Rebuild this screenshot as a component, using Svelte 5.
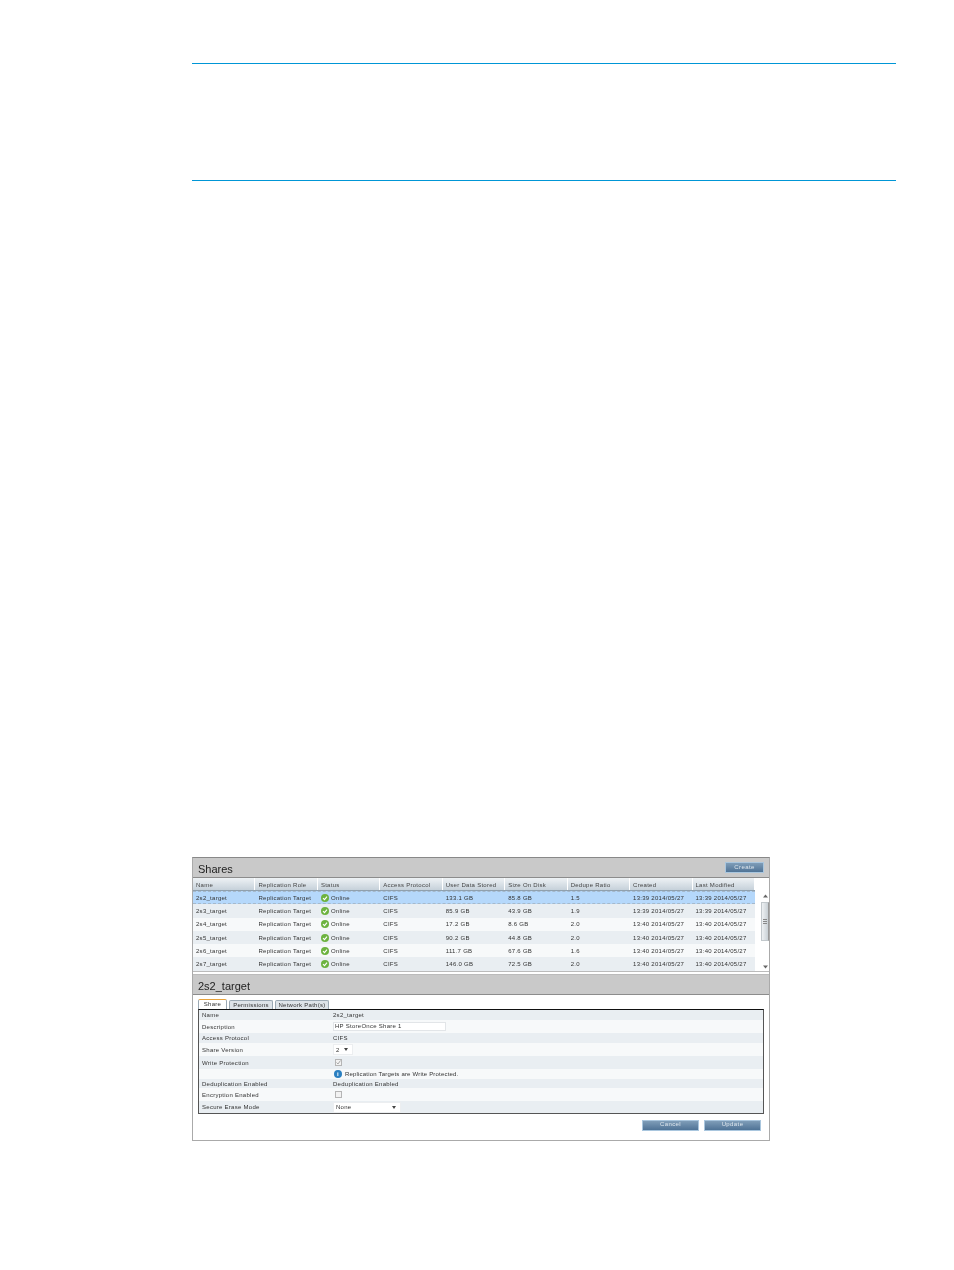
<script>
  const columns = ['Name', 'Replication Role', 'Status', 'Access Protocol', 'User Data Stored', 'Size On Disk', 'Dedupe Ratio', 'Created', 'Last Modified'];

  const shares = [
    { name: '2s2_target', stored: '133.1 GB', disk: '85.8 GB', ratio: '1.5', created: '13:39 2014/05/27', modified: '13:39 2014/05/27' },
    { name: '2s3_target', stored: '85.9 GB', disk: '43.9 GB', ratio: '1.9', created: '13:39 2014/05/27', modified: '13:39 2014/05/27' },
    { name: '2s4_target', stored: '17.2 GB', disk: '8.6 GB', ratio: '2.0', created: '13:40 2014/05/27', modified: '13:40 2014/05/27' },
    { name: '2s5_target', stored: '90.2 GB', disk: '44.8 GB', ratio: '2.0', created: '13:40 2014/05/27', modified: '13:40 2014/05/27' },
    { name: '2s6_target', stored: '111.7 GB', disk: '67.6 GB', ratio: '1.6', created: '13:40 2014/05/27', modified: '13:40 2014/05/27' },
    { name: '2s7_target', stored: '146.0 GB', disk: '72.5 GB', ratio: '2.0', created: '13:40 2014/05/27', modified: '13:40 2014/05/27' }
  ];
</script>

<div class="page">
  <div class="rule"></div>
  <div class="rule second"></div>

  <div class="panel">
    <div class="titlebar">
      <h2>Shares</h2>
      <button class="btn create">Create</button>
    </div>

    <div class="table-area">
      <div class="table">
        <div class="row head">
          {#each columns as col}
            <div class="cell">{col}</div>
          {/each}
        </div>
        {#each shares as s, i}
          <div class="row" class:selected={i === 0} class:odd={i % 2 === 1}>
            <div class="cell">{s.name}</div>
            <div class="cell">Replication Target</div>
            <div class="cell status">
              <svg width="8" height="8" viewBox="0 0 8 8">
                <circle cx="4" cy="4" r="4" fill="#6db33f" />
                <path d="M2 4.1 3.5 5.6 6 2.6" fill="none" stroke="#fff" stroke-width="1.1" />
              </svg>
              Online
            </div>
            <div class="cell">CIFS</div>
            <div class="cell">{s.stored}</div>
            <div class="cell">{s.disk}</div>
            <div class="cell">{s.ratio}</div>
            <div class="cell">{s.created}</div>
            <div class="cell">{s.modified}</div>
          </div>
        {/each}
      </div>
      <div class="scrollbar">
        <svg class="arrow" width="5" height="4" viewBox="0 0 5 4"><path d="M2.5 0.5 5 3.5H0z" fill="#666" /></svg>
        <div class="thumb"><span></span><span></span><span></span></div>
        <svg class="arrow" width="5" height="4" viewBox="0 0 5 4"><path d="M2.5 3.5 5 0.5H0z" fill="#666" /></svg>
      </div>
    </div>

    <div class="titlebar detail-title">
      <h2>2s2_target</h2>
    </div>

    <div class="detail">
      <div class="tabs">
        <div class="tab active">Share</div>
        <div class="tab">Permissions</div>
        <div class="tab wide">Network Path(s)</div>
      </div>

      <div class="form">
        <div class="frow dark h10"><div class="label">Name</div><div>2s2_target</div></div>
        <div class="frow h13"><div class="label">Description</div><div class="input">HP StoreOnce Share 1</div></div>
        <div class="frow dark h10"><div class="label">Access Protocol</div><div>CIFS</div></div>
        <div class="frow h13"><div class="label">Share Version</div><div class="select small">2<i></i></div></div>
        <div class="frow dark h13"><div class="label">Write Protection</div><div class="check checked">
          <svg width="7" height="7" viewBox="0 0 7 7"><path d="M1.5 3.5 3 5 5.5 1.5" fill="none" stroke="#aaa" stroke-width="1" /></svg>
        </div></div>
        <div class="frow h10"><div class="label"></div><div class="note">
          <span class="info">i</span>
          Replication Targets are Write Protected.
        </div></div>
        <div class="frow dark h9"><div class="label">Deduplication Enabled</div><div>Deduplication Enabled</div></div>
        <div class="frow h13"><div class="label">Encryption Enabled</div><div class="check"></div></div>
        <div class="frow dark h12"><div class="label">Secure Erase Mode</div><div class="select large">None<i></i></div></div>
      </div>

      <div class="actions">
        <button class="btn action">Cancel</button>
        <button class="btn action">Update</button>
      </div>
    </div>
  </div>
</div>

<style>
  :global(body) {
    margin: 0;
    background: #fff;
  }

  .page {
    width: 954px;
    height: 1270px;
    box-sizing: border-box;
    padding: 63px 58px 0 192px;
    font-family: "Liberation Sans", Arial, sans-serif;
    color: #333;
  }

  .rule {
    height: 1px;
    background: #0096d6;
  }

  .rule.second {
    margin-top: 116px;
  }

  .panel {
    width: 578px;
    height: 284px;
    box-sizing: border-box;
    margin-top: 676px;
    border: 1px solid #aaa;
    border-top-color: #888;
    font-size: 6px;
    letter-spacing: 0.27px;
    display: flex;
    flex-direction: column;
  }

  .panel > *,
  .form,
  .tabs {
    filter: blur(0.25px);
  }

  .titlebar {
    height: 20px;
    box-sizing: border-box;
    flex: none;
    background: #c9c9c9;
    border-bottom: 1px solid #8c8c8c;
    display: flex;
    align-items: center;
    justify-content: space-between;
    padding: 0 5px;
  }

  h2 {
    margin: 0;
    padding-top: 2px;
    font-size: 11px;
    font-weight: normal;
    letter-spacing: 0;
    color: #222;
  }

  .btn {
    border: 1px solid #a9c6de;
    padding: 0 0 2px;
    color: #dfe7ee;
    font: inherit;
    letter-spacing: 0.4px;
    background: linear-gradient(#7f9db8, #4f7396);
  }

  .create {
    width: 39px;
    height: 11px;
  }

  .table-area {
    display: flex;
    height: 94px;
    box-sizing: border-box;
    flex: none;
    border-bottom: 1px solid #bbb;
  }

  .table {
    width: 562px;
    flex: none;
  }

  .row {
    display: grid;
    grid-template-columns: repeat(9, 62.45px);
    height: 13.3px;
    align-items: center;
    background: #f7f9fa;
  }

  .row.odd {
    background: #e9eef2;
  }

  .row.selected {
    background: #b5d8fb;
    border-top: 1px dashed #a5b9cc;
    border-bottom: 1px dashed #a5b9cc;
    box-sizing: border-box;
  }

  .row.head {
    height: 13px;
    background: linear-gradient(#eef2f5, #c6d1da);
    border-bottom: 1px solid #8fa0ae;
    box-sizing: border-box;
  }

  .head .cell {
    height: 100%;
    display: flex;
    align-items: center;
    padding-top: 1px;
    border-right: 1px solid #fff;
    color: #444;
  }

  .cell {
    padding-left: 3px;
    white-space: nowrap;
    overflow: hidden;
    box-sizing: border-box;
  }

  .status {
    display: flex;
    align-items: center;
    gap: 2px;
  }

  .scrollbar {
    flex: 1;
    display: flex;
    flex-direction: column;
    align-items: center;
    padding: 16px 0 2px 6px;
    gap: 5px;
  }

  .arrow {
    flex: none;
  }

  .thumb {
    width: 8px;
    height: 39px;
    box-sizing: border-box;
    margin-top: -1px;
    flex: none;
    background: linear-gradient(90deg, #eef1f3, #c9d0d5);
    border: 1px solid #c2c8cc;
    border-right-color: #999;
    display: flex;
    flex-direction: column;
    align-items: center;
    justify-content: center;
    gap: 1px;
  }

  .thumb span {
    width: 4px;
    height: 1px;
    background: #888;
  }

  .arrow:last-child {
    margin-top: 19px;
  }

  .detail-title {
    height: 21px;
    margin-top: 2px;
    border-top: 1px solid #bbb;
  }

  .detail {
    flex: 1;
    padding: 4px 5px 0;
  }

  .tabs {
    display: flex;
    gap: 2px;
    height: 10px;
    align-items: flex-end;
  }

  .tab {
    width: 29px;
    height: 9px;
    box-sizing: border-box;
    border: 1px solid #9aa8b3;
    border-bottom: none;
    border-radius: 2px 2px 0 0;
    background: #dde3e8;
    text-align: center;
    line-height: 8px;
  }

  .tab.active {
    height: 10px;
    background: #fff;
    border-top: 1px solid #e8a33d;
  }

  .tab:nth-child(2) {
    width: 44px;
  }

  .tab.wide {
    width: 54px;
  }

  .form {
    height: 105px;
    box-sizing: border-box;
    border: 1px solid #555;
    border-top-color: #111;
    background: #f7f9fa;
  }

  .frow {
    display: grid;
    grid-template-columns: 131px 1fr;
    align-items: center;
    padding-left: 3px;
  }

  .frow.dark {
    background: #e9eef2;
  }

  .h9 { height: 9px; }
  .h10 { height: 10px; }
  .h12 { height: 12px; }
  .h13 { height: 13px; }

  .input {
    width: 113px;
    height: 9px;
    box-sizing: border-box;
    background: #fff;
    border: 1px solid #e2e5e8;
    line-height: 7px;
    padding-left: 1px;
  }

  .select {
    height: 11px;
    box-sizing: border-box;
    background: #fff;
    border: 1px solid #eceef0;
    display: flex;
    align-items: center;
    justify-content: space-between;
    padding: 0 4px 0 2px;
  }

  .select i {
    border: 2px solid transparent;
    border-top: 3px solid #444;
    border-bottom: none;
  }

  .select.small {
    width: 20px;
  }

  .select.large {
    width: 68px;
  }

  .check {
    width: 7px;
    height: 7px;
    margin-left: 2px;
    box-sizing: border-box;
    border: 1px solid #b5b5b5;
    background: #f2f2f2;
    display: flex;
  }

  .check svg {
    flex: none;
    margin: -1px;
  }

  .note {
    display: flex;
    align-items: center;
    gap: 3px;
    letter-spacing: 0.19px;
  }

  .info {
    width: 8px;
    height: 8px;
    margin-left: 1px;
    border-radius: 50%;
    background: #2a7fc1;
    color: #fff;
    font-size: 6px;
    font-weight: bold;
    line-height: 8px;
    text-align: center;
  }

  .actions {
    display: flex;
    justify-content: flex-end;
    gap: 5px;
    padding: 6px 3px 0 0;
  }

  .action {
    width: 57px;
    height: 11px;
    line-height: 7px;
  }
</style>
